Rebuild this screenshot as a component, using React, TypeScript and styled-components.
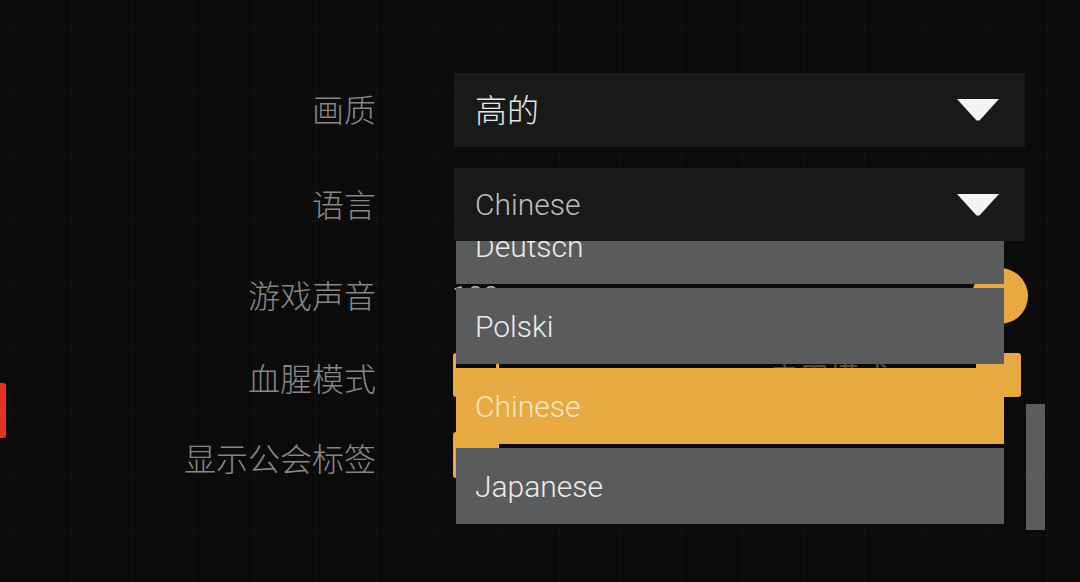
import React from "react";
import styled, { createGlobalStyle } from "styled-components";

const Global = createGlobalStyle`
  html, body { margin: 0; padding: 0; background: #0b0b0c; }
  body { width: 1080px; height: 582px; overflow: hidden; font-family: Roboto, "Noto Sans CJK SC", sans-serif; }
`;

const ORANGE = "#e8a842";

const Page = styled.div`
  position: relative;
  width: 1080px;
  height: 582px;
  overflow: hidden;
  box-sizing: border-box;
  padding-top: 73px;
  background-color: #0b0b0c;
  background-image:
    linear-gradient(to right, rgba(255, 255, 255, 0.022) 1px, transparent 1px),
    linear-gradient(to bottom, rgba(255, 255, 255, 0.02) 1px, transparent 1px);
  background-size: 61px 63px;
  background-position: 10px 31px;
`;

const SideTab = styled.div`
  position: absolute;
  left: 0;
  top: 383px;
  width: 6px;
  height: 55px;
  background: #e23424;
  border-radius: 0 3px 3px 0;
`;

const Settings = styled.div`
  display: grid;
  grid-template-columns: 376px 571px;
  grid-template-rows: 74px 73px 68px 48px 70px;
  column-gap: 78px;
  row-gap: 21px;
`;

const Label = styled.div<{ $shift?: number }>`
  align-self: center;
  justify-self: end;
  text-align: right;
  font-family: "Noto Sans CJK SC", sans-serif;
  font-weight: 300;
  font-size: 32px;
  line-height: 1;
  color: #878787;
  white-space: nowrap;
  transform: translateY(${(p) => p.$shift ?? -2}px);
`;

const Select = styled.div`
  position: relative;
  display: flex;
  align-items: center;
  justify-content: space-between;
  height: 100%;
  box-sizing: border-box;
  padding: 0 26px 0 21px;
  background: #19191a;
`;

const SelectValue = styled.span<{ $cjk?: boolean; $muted?: boolean }>`
  font-family: ${(p) => (p.$cjk ? '"Noto Sans CJK SC", sans-serif' : 'Roboto, sans-serif')};
  font-weight: 300;
  font-size: ${(p) => (p.$cjk ? 32 : 30)}px;
  line-height: 1;
  color: ${(p) => (p.$muted ? "#bdbdbd" : "#e6e6e6")};
  transform: translateY(${(p) => (p.$cjk ? -2 : 0)}px);
`;

const Caret = () => (
  <svg width="42" height="22" viewBox="0 0 42 22">
    <polygon points="0,0 42,0 22.5,21.5 19.5,21.5" fill="#f4f4f4" />
  </svg>
);

const Menu = styled.div`
  position: absolute;
  top: 100%;
  left: 0;
  right: 0;
  height: 289px;
  z-index: 5;
`;

const MenuList = styled.div`
  margin-left: 2px;
  width: 548px;
  height: 284px;
  overflow: hidden;
`;

const MenuScroll = styled.div`
  display: flex;
  flex-direction: column;
  gap: 4px;
  margin-top: -33px;
`;

const Option = styled.div<{ $active?: boolean }>`
  flex: none;
  height: 76px;
  display: flex;
  align-items: center;
  padding-left: 19px;
  background: ${(p) => (p.$active ? ORANGE : "#5a5b5d")};
  color: ${(p) => (p.$active ? "#f8e9bd" : "#ececec")};
  font-family: Roboto, sans-serif;
  font-weight: 300;
  font-size: 30px;
`;

const ScrollBar = styled.div`
  position: absolute;
  left: 572px;
  top: 163px;
  width: 19px;
  height: 126px;
  background: #5b5c5e;
`;

const SliderCell = styled.div`
  position: relative;
  display: flex;
  align-items: center;
  height: 100%;
  margin-left: -2px;
  margin-right: -3px;
`;

const SliderValue = styled.span`
  width: 50px;
  font-family: Roboto, sans-serif;
  font-weight: 300;
  font-size: 28px;
  color: #bdbdbd;
`;

const Track = styled.div`
  flex: 1;
  height: 4px;
  background: #1a1a1a;
`;

const Thumb = styled.div`
  flex: none;
  width: 56px;
  height: 56px;
  margin-left: -28px;
  border-radius: 50%;
  background: ${ORANGE};
`;

const ToggleCell = styled.div`
  display: flex;
  align-items: center;
  justify-content: space-between;
  height: 100%;
  margin-left: -1px;
  padding-right: 4px;
`;

const Check = styled.div<{ $on?: boolean; $size: number }>`
  box-sizing: border-box;
  width: 46px;
  height: ${(p) => p.$size}px;
  border: 3px solid ${ORANGE};
  border-radius: 3px;
  background: ${(p) => (p.$on ? ORANGE : "transparent")};
`;

const ToggleText = styled.span`
  font-family: "Noto Sans CJK SC", sans-serif;
  font-size: 30px;
  color: #5e4a2c;
  margin-left: 270px;
  margin-right: auto;
`;

const EndButton = styled.div`
  width: 45px;
  height: 44px;
  border-radius: 3px;
  background: ${ORANGE};
`;

export default function App() {
  return (
    <Page>
      <Global />
      <SideTab />
      <Settings>
        <Label>画质</Label>
        <Select>
          <SelectValue $cjk>高的</SelectValue>
          <Caret />
        </Select>

        <Label>语言</Label>
        <Select>
          <SelectValue $muted>Chinese</SelectValue>
          <Caret />
          <Menu>
            <MenuList>
              <MenuScroll>
                <Option>Deutsch</Option>
                <Option>Polski</Option>
                <Option $active>Chinese</Option>
                <Option>Japanese</Option>
              </MenuScroll>
            </MenuList>
            <ScrollBar />
          </Menu>
        </Select>

        <Label>游戏声音</Label>
        <SliderCell>
          <SliderValue>100</SliderValue>
          <Track />
          <Thumb />
        </SliderCell>

        <Label $shift={2}>血腥模式</Label>
        <ToggleCell>
          <Check $size={44} />
          <ToggleText>启用模式</ToggleText>
          <EndButton />
        </ToggleCell>

        <Label $shift={2}>显示公会标签</Label>
        <ToggleCell>
          <Check $on $size={46} />
        </ToggleCell>
      </Settings>
    </Page>
  );
}
